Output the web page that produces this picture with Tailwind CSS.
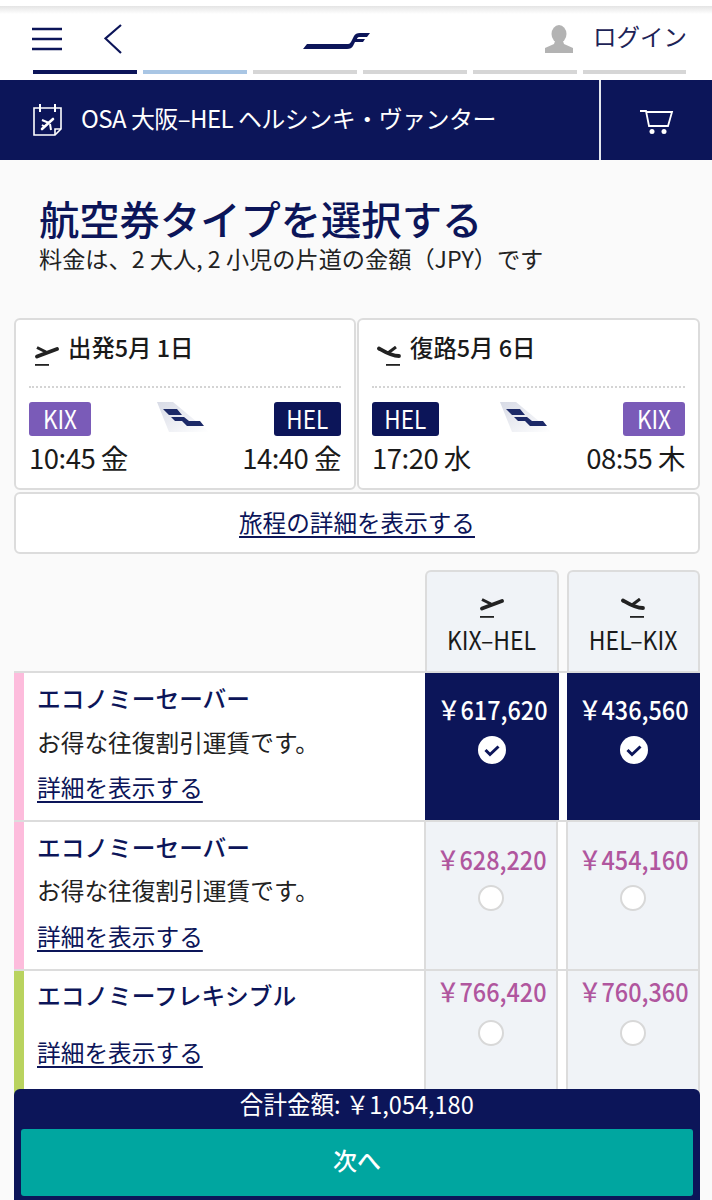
<!DOCTYPE html>
<html lang="ja">
<head>
    <meta charset="UTF-8">
    <title>フィンエアー</title>
    <script src="https://cdn.jsdelivr.net/npm/@tailwindcss/browser@4"></script>
</head>
<body class="relative w-[712px] h-[1200px] overflow-hidden bg-[#fafafa] text-[#1a1a1a] font-['Noto_Sans_CJK_JP','Noto_Sans',sans-serif]">

    <!-- header -->
    <header class="h-20 bg-white relative">
        <div class="h-[6px] bg-white"></div>
        <div class="h-2 bg-gradient-to-b from-[#e4e4e4] to-white"></div>
        <div class="flex items-center h-[50px] pl-8 text-[#0c1559]">
            <svg class="w-[30px] h-[24px] shrink-0" viewBox="0 0 30 24" fill="none" stroke="#0c1559" stroke-width="2.6"><path d="M0 2h30M0 12h30M0 22h30"/></svg>
            <svg class="ml-[42px] w-[18px] h-[30px] shrink-0" viewBox="0 0 18 30" fill="none" stroke="#0c1559" stroke-width="2.2"><path d="M17 1 1.500 14.500 17 29"/></svg>
            <svg class="ml-[181px] mt-[3px] w-[67px] h-[17px] shrink-0" viewBox="0 0 67 17" fill="#0c1559"><path d="M0 17 4 12H45C47 12 48 10 49 8L51 4C52 2 54 1 57 1H67L64 5H56C55 5 54 6 54 7H62L60 10H52L50 14C49 16 47 17 44 17Z"/></svg>
            <svg class="ml-[175px] w-[28px] h-[28px] shrink-0" viewBox="0 0 28 28" fill="#b3b3b3"><ellipse cx="14" cy="9" rx="7.500" ry="9"/><path d="M10 16h8l1 3 9 4v5H0v-5l9-4z"/></svg>
            <span class="ml-[20px] text-[23.5px] leading-none -mt-1 text-[#1d2356] whitespace-nowrap">ログイン</span>
        </div>
        <div class="absolute left-[33px] top-[70px] flex gap-[6px]">
            <div class="w-[104px] h-[4px] bg-[#0c1559]"></div>
            <div class="w-[104px] h-[4px] bg-[#a9c6e4]"></div>
            <div class="w-[104px] h-[4px] bg-[#d6d6d6]"></div>
            <div class="w-[104px] h-[4px] bg-[#d6d6d6]"></div>
            <div class="w-[104px] h-[4px] bg-[#d6d6d6]"></div>
            <div class="w-[103px] h-[4px] bg-[#d6d6d6]"></div>
        </div>
    </header>

    <!-- route bar -->
    <div class="flex h-20 bg-[#0c1559] text-white">
        <div class="flex items-center w-[599px] pl-[33px]">
            <svg class="w-[29px] h-[32px] shrink-0" viewBox="0 0 29 32" fill="none" stroke="white" stroke-width="1.600"><path d="M1 4h27v21l-6 6H1z"/><path d="M7 0v8M22 0v8" stroke-width="2"/><path d="M22 31v-6h6"/><path d="M9 25 20 15" stroke-width="2.600" stroke-linecap="round"/><path d="M9 16 16 19M17 20 18 26M9 21 12 23" stroke-width="2"/></svg>
            <span class="ml-[19px] mb-1 text-[24px] tracking-[-0.55px] whitespace-nowrap">OSA 大阪–HEL ヘルシンキ・ヴァンター</span>
        </div>
        <div class="flex-1 border-l-2 border-[#e4e6ee] flex items-center justify-center pt-1">
            <svg class="w-[34px] h-[24px]" viewBox="0 0 34 24" fill="none" stroke="white" stroke-width="1.800"><path d="M0 1H6L9 16H28L32 2H6.500"/><circle cx="12" cy="21.500" r="2.500" fill="white" stroke="none"/><circle cx="24" cy="21.500" r="2.500" fill="white" stroke="none"/></svg>
        </div>
    </div>

    <!-- title -->
    <div class="pl-[39px] pt-[31px] h-[158px]">
        <h1 class="text-[40.3px] leading-[54px] font-medium text-[#0c1559] whitespace-nowrap">航空券タイプを選択する</h1>
        <p class="text-[23.2px] leading-[24px] mt-[1px] whitespace-nowrap text-[#222]">料金は、2 大人, 2 小児の片道の金額（JPY）です</p>
    </div>

    <!-- flights -->
    <div class="ml-[14px] w-[686px] flex gap-[1px]">
        <div class="w-[342px] h-[172px] shrink-0 bg-white border-2 border-[#dcdcdc] rounded-[6px] px-[13px]">
            <div class="h-[68px] flex items-start pt-[10px] border-b-2 border-dotted border-[#d4d4d4]">
                <svg class="w-[24px] h-[20px] mt-[16px] ml-[6px] shrink-0" viewBox="0 0 24 20" fill="none" stroke="#222"><path d="M2 10.500 22 3" stroke-width="3.800" stroke-linecap="round"/><path d="M2 1.500 11 6" stroke-width="3"/><rect x="0" y="18" width="14" height="1.800" fill="#222" stroke="none"/></svg>
                <span class="ml-[9px] text-[23.4px] leading-[34px] font-medium whitespace-nowrap">出発5月 1日</span>
            </div>
            <div class="flex justify-between items-start pt-[14px]">
                <div>
                    <div class="w-[62px] h-[34px] bg-[#7a5bb8] rounded-[3px] text-white text-[25px] leading-[33px] text-center"><span class="inline-block scale-x-90">KIX</span></div>
                    <div class="text-[27.500px] leading-[38px] mt-[2px] tracking-[-0.5px] whitespace-nowrap">10:45 金</div>
                </div>
                <svg class="-ml-[5px] w-[52px] h-[31px]" viewBox="0 0 52 31">
                    <defs><linearGradient id="tailA" x1="0" y1="0" x2="1" y2="1"><stop offset="0" stop-color="#d8dbe6"/><stop offset="1" stop-color="#ffffff"/></linearGradient></defs>
                    <path d="M0 0H16L52 30H12Z" fill="url(#tailA)"/>
                    <path d="M6 7H20L25 13H12ZM14 15H27L32 19H43L47 24H30L25 19H18Z" fill="#1d2a68"/>
                </svg>
                <div class="text-right">
                    <div class="ml-auto w-[67px] h-[34px] bg-[#0c1559] rounded-[3px] text-white text-[25px] leading-[33px] text-center"><span class="inline-block scale-x-90">HEL</span></div>
                    <div class="text-[27.500px] leading-[38px] mt-[2px] tracking-[-0.5px] whitespace-nowrap">14:40 金</div>
                </div>
            </div>
        </div>
        <div class="w-[343px] h-[172px] shrink-0 bg-white border-2 border-[#dcdcdc] rounded-[6px] px-[13px]">
            <div class="h-[68px] flex items-start pt-[10px] border-b-2 border-dotted border-[#d4d4d4]">
                <svg class="w-[24px] h-[20px] mt-[16px] ml-[5px] shrink-0" viewBox="0 0 24 20" fill="none" stroke="#222"><path d="M2 2.500C8 6 14 10 22 10" stroke-width="3.800" stroke-linecap="round"/><path d="M19 1 11 7" stroke-width="3"/><rect x="9" y="18" width="14" height="1.800" fill="#222" stroke="none"/></svg>
                <span class="ml-[9px] text-[23.4px] leading-[34px] font-medium whitespace-nowrap">復路5月 6日</span>
            </div>
            <div class="flex justify-between items-start pt-[14px]">
                <div>
                    <div class="w-[67px] h-[34px] bg-[#0c1559] rounded-[3px] text-white text-[25px] leading-[33px] text-center"><span class="inline-block scale-x-90">HEL</span></div>
                    <div class="text-[27.500px] leading-[38px] mt-[2px] tracking-[-0.5px] whitespace-nowrap">17:20 水</div>
                </div>
                <svg class="-ml-[5px] w-[52px] h-[31px]" viewBox="0 0 52 31">
                    <defs><linearGradient id="tailB" x1="0" y1="0" x2="1" y2="1"><stop offset="0" stop-color="#d8dbe6"/><stop offset="1" stop-color="#ffffff"/></linearGradient></defs>
                    <path d="M0 0H16L52 30H12Z" fill="url(#tailB)"/>
                    <path d="M6 7H20L25 13H12ZM14 15H27L32 19H43L47 24H30L25 19H18Z" fill="#1d2a68"/>
                </svg>
                <div class="text-right">
                    <div class="ml-auto w-[62px] h-[34px] bg-[#7a5bb8] rounded-[3px] text-white text-[25px] leading-[33px] text-center"><span class="inline-block scale-x-90">KIX</span></div>
                    <div class="text-[27.500px] leading-[38px] mt-[2px] tracking-[-0.5px] whitespace-nowrap">08:55 木</div>
                </div>
            </div>
        </div>
    </div>

    <div class="ml-[14px] w-[686px] mt-[2px] h-[62px] bg-white border-2 border-[#dcdcdc] rounded-[6px] flex items-center justify-center">
        <a class="text-[23.6px] text-[#0c1559] underline underline-offset-4 whitespace-nowrap">旅程の詳細を表示する</a>
    </div>

    <!-- fare table -->
    <div class="mt-[16px] ml-[14px] w-[686px]">
        <div class="flex h-[103px] pl-[411px] gap-[8px] border-b-2 border-[#dcdcdc]">
            <div class="w-[134px] bg-[#f0f3f7] border-2 border-b-0 border-[#dcdcdc] rounded-t-[6px] flex flex-col items-center pt-[26px]">
                <svg class="w-[24px] h-[20px]" viewBox="0 0 24 20" fill="none" stroke="#222"><path d="M2 10.500 22 3" stroke-width="3.800" stroke-linecap="round"/><path d="M2 1.500 11 6" stroke-width="3"/><rect x="0" y="18" width="14" height="1.800" fill="#222" stroke="none"/></svg>
                <span class="mt-[3px] text-[25px] leading-[36px] whitespace-nowrap inline-block scale-x-[0.92]">KIX–HEL</span>
            </div>
            <div class="w-[134px] bg-[#f0f3f7] border-2 border-b-0 border-[#dcdcdc] rounded-t-[6px] flex flex-col items-center pt-[26px]">
                <svg class="w-[24px] h-[20px]" viewBox="0 0 24 20" fill="none" stroke="#222"><path d="M2 2.500C8 6 14 10 22 10" stroke-width="3.800" stroke-linecap="round"/><path d="M19 1 11 7" stroke-width="3"/><rect x="9" y="18" width="14" height="1.800" fill="#222" stroke="none"/></svg>
                <span class="mt-[3px] text-[25px] leading-[36px] whitespace-nowrap inline-block scale-x-[0.92]">HEL–KIX</span>
            </div>
        </div>

        <div class="flex h-[149px] border-b-2 border-[#dcdcdc] bg-white">
            <div class="w-[10px] bg-[#fdbcdc] shrink-0"></div>
            <div class="w-[401px] pl-[13px] pt-[7px] text-[#0c1559]">
                <div class="text-[23.7px] leading-[36px] font-medium">エコノミーセーバー</div>
                <div class="text-[23.7px] leading-[36px] mt-[8px] text-[#222]">お得な往復割引運賃です。</div>
                <a class="block text-[23.7px] leading-[36px] mt-[9px] underline underline-offset-4">詳細を表示する</a>
            </div>
            <div class="w-[134px] bg-[#0c1559] text-white flex flex-col items-center pt-[18px]">
                <span class="text-[26px] leading-[36px] font-medium whitespace-nowrap inline-block scale-x-90">￥617,620</span>
                <svg class="w-[28px] h-[28px] mt-[9px]" viewBox="0 0 28 28"><circle cx="14" cy="14" r="14" fill="white"/><path d="M7.500 14l4.500 4.500L20.500 10.500" fill="none" stroke="#0c1559" stroke-width="3"/></svg>
            </div>
            <div class="w-[8px] bg-white"></div>
            <div class="w-[133px] bg-[#0c1559] text-white flex flex-col items-center pt-[18px]">
                <span class="text-[26px] leading-[36px] font-medium whitespace-nowrap inline-block scale-x-90">￥436,560</span>
                <svg class="w-[28px] h-[28px] mt-[9px]" viewBox="0 0 28 28"><circle cx="14" cy="14" r="14" fill="white"/><path d="M7.500 14l4.500 4.500L20.500 10.500" fill="none" stroke="#0c1559" stroke-width="3"/></svg>
            </div>
        </div>

        <div class="flex h-[149px] border-b-2 border-[#dcdcdc] bg-white">
            <div class="w-[10px] bg-[#fdbcdc] shrink-0"></div>
            <div class="w-[401px] pl-[13px] pt-[7px] text-[#0c1559]">
                <div class="text-[23.7px] leading-[36px] font-medium">エコノミーセーバー</div>
                <div class="text-[23.7px] leading-[36px] mt-[7px] text-[#222]">お得な往復割引運賃です。</div>
                <a class="block text-[23.7px] leading-[36px] mt-[10px] underline underline-offset-4">詳細を表示する</a>
            </div>
            <div class="w-[134px] bg-[#f0f3f7] border-x-2 border-[#dcdcdc] text-[#b0569e] flex flex-col items-center pt-[19px]">
                <span class="text-[26px] leading-[36px] font-medium whitespace-nowrap inline-block scale-x-90">￥628,220</span>
                <div class="w-[26px] h-[26px] mt-[8px] rounded-full bg-white border-2 border-[#d8d8d8]"></div>
            </div>
            <div class="w-[8px] bg-white"></div>
            <div class="w-[134px] bg-[#f0f3f7] border-x-2 border-[#dcdcdc] text-[#b0569e] flex flex-col items-center pt-[19px]">
                <span class="text-[26px] leading-[36px] font-medium whitespace-nowrap inline-block scale-x-90">￥454,160</span>
                <div class="w-[26px] h-[26px] mt-[8px] rounded-full bg-white border-2 border-[#d8d8d8]"></div>
            </div>
        </div>

        <div class="flex h-[130px] bg-white">
            <div class="w-[10px] bg-[#b9d35f] shrink-0"></div>
            <div class="w-[401px] pl-[13px] pt-[6px] text-[#0c1559]">
                <div class="text-[23.7px] leading-[36px] font-medium">エコノミーフレキシブル</div>
                <a class="block text-[23.7px] leading-[36px] mt-[21px] underline underline-offset-4">詳細を表示する</a>
            </div>
            <div class="w-[134px] bg-[#f0f3f7] border-x-2 border-[#dcdcdc] text-[#b0569e] flex flex-col items-center pt-[2px]">
                <span class="text-[26px] leading-[36px] font-medium whitespace-nowrap inline-block scale-x-90">￥766,420</span>
                <div class="w-[26px] h-[26px] mt-[11px] rounded-full bg-white border-2 border-[#d8d8d8]"></div>
            </div>
            <div class="w-[8px] bg-white"></div>
            <div class="w-[134px] bg-[#f0f3f7] border-x-2 border-[#dcdcdc] text-[#b0569e] flex flex-col items-center pt-[2px]">
                <span class="text-[26px] leading-[36px] font-medium whitespace-nowrap inline-block scale-x-90">￥760,360</span>
                <div class="w-[26px] h-[26px] mt-[11px] rounded-full bg-white border-2 border-[#d8d8d8]"></div>
            </div>
        </div>
    </div>

    <!-- total bar, sits over the table -->
    <div class="absolute left-[14px] top-[1089px] w-[686px] h-[111px] bg-[#0c1559] rounded-t-[6px] text-white">
        <div class="h-[40px] text-center text-[24.5px] leading-[29px] whitespace-nowrap"><span class="inline-block scale-x-[0.96]">合計金額: ￥1,054,180</span></div>
        <button class="block mx-[7px] w-[672px] h-[67px] pb-[5px] bg-[#00a6a0] rounded-[3px] text-[24px] font-medium text-white">次へ</button>
    </div>
</body>
</html>
